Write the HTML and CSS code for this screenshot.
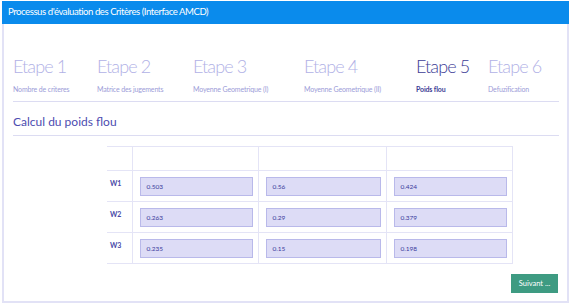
FILE: index.html
```html
<!DOCTYPE html>
<html>
<head>
<meta charset="utf-8">
<link rel="stylesheet" href="styles.css">
</head>
<body>
<div class="card">
  <div class="card-header">Processus d'évaluation des Critères (Interface AMCD)</div>
  <div class="card-body">
    <div class="steps">
      <div class="step s1"><div class="step-title">Etape 1</div><div class="step-label">Nombre de criteres</div></div>
      <div class="step s2"><div class="step-title">Etape 2</div><div class="step-label">Matrice des jugements</div></div>
      <div class="step s3"><div class="step-title">Etape 3</div><div class="step-label">Moyenne Geometrique (I)</div></div>
      <div class="step s4"><div class="step-title">Etape 4</div><div class="step-label">Moyenne Geometrique (II)</div></div>
      <div class="step s5 active"><div class="step-title">Etape 5</div><div class="step-label">Poids flou</div></div>
      <div class="step s6"><div class="step-title">Etape 6</div><div class="step-label">Defuzification</div></div>
    </div>
    <h2 class="section-title">Calcul du poids flou</h2>
    <table class="grid">
      <colgroup><col class="c0"><col class="c1"><col class="c2"><col class="c3"></colgroup>
      <tr class="head"><th></th><th></th><th></th><th></th></tr>
      <tr><th>W1</th><td><div class="field">0.503</div></td><td><div class="field">0.56</div></td><td><div class="field">0.424</div></td></tr>
      <tr><th>W2</th><td><div class="field">0.263</div></td><td><div class="field">0.29</div></td><td><div class="field">0.379</div></td></tr>
      <tr><th>W3</th><td><div class="field">0.235</div></td><td><div class="field">0.15</div></td><td><div class="field">0.198</div></td></tr>
    </table>
    <div class="actions"><button class="btn">Suivant ...</button></div>
  </div>
</div>
</body>
</html>
```
FILE: styles.css
```css
html, body { margin: 0; padding: 0; background: #fff; }
body { font-family: Lato, "Open Sans", sans-serif; width: 572px; height: 308px; overflow: hidden; }
.card {
  margin: 1px 0 0 2px;
  width: 563px;
  height: 300px;
  border: 2px solid #e2e2f6;
  border-top: none;
}
.card-header {
  background: #0a8bec;
  color: #fff;
  font-size: 9.6px;
  letter-spacing: -0.45px;
  height: 23px;
  line-height: 22px;
  padding-left: 6px;
  margin-left: -2px;
  margin-right: -2px;
}
.card-body { padding: 0 8px 0 9px; }
.steps {
  display: flex;
  padding-top: 32px;
  padding-bottom: 8px;
  border-bottom: 1px solid #dcdcf2;
}
.step-title { font-size: 18px; letter-spacing: -0.9px; font-weight: 300; color: #b1b1e6; line-height: 21px; }
.step-label { font-size: 7px; letter-spacing: -0.15px; color: #9c9cd8; margin-top: 8px; }
.step.active .step-title { color: #3d3d96; }
.step.active .step-label { color: #3d3d96; font-weight: 700; }
.s1 { width: 84px; }
.s2 { width: 96px; }
.s3 { width: 111px; }
.s4 { width: 112px; }
.s5 { width: 72px; }
.section-title {
  margin: 12px 0 0;
  font-size: 12px;
  font-weight: 400;
  color: #4c4cb0;
  padding-bottom: 6px;
  border-bottom: 1px solid #dcdcf2;
}
.grid {
  border-collapse: collapse;
  table-layout: fixed;
  margin: 10px 0 0 94px;
  width: 405px;
}
.c0 { width: 25px; }
.c1 { width: 126px; }
.c2 { width: 128px; }
.c3 { width: 126px; }
.grid th, .grid td { border: 1px solid #e4e4f6; padding: 0; }
.grid tr th:first-child { border-left: none; }
.grid tr.head th { height: 23px; padding: 0; }
.grid tr:not(.head) th { font-size: 7px; font-weight: 700; color: #4a4aa8; text-align: left; vertical-align: top; padding: 8px 0 0 3px; height: 22px; }
.grid td { height: 30px; padding: 0 5px 0 7px; }
.field {
  height: 17px;
  background: #dddcf6;
  border: 1px solid #b9b9ea;
  font-size: 6.5px;
  color: #3a3a9c;
  line-height: 17px;
  padding-left: 6px;
}
.actions { display: flex; justify-content: flex-end; margin-top: 10px; padding-right: 1px; }
.btn {
  background: #3e9b82;
  color: #fff;
  border: none;
  font-family: Lato, sans-serif;
  font-size: 7.5px;
  width: 47px;
  height: 19px;
  padding: 0;
}
```
